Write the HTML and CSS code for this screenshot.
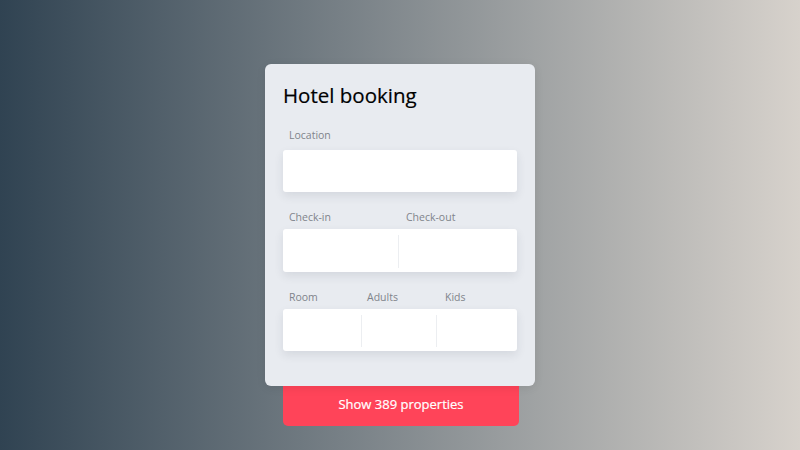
FILE: index.html
```html
<!DOCTYPE html>
<html lang="en">
<head>
<meta charset="utf-8">
<link rel="stylesheet" href="styles.css">
</head>
<body>
<main class="wrap">
  <form class="card">
    <h1 class="title">Hotel booking</h1>
    <label class="label label-first">Location</label>
    <div class="box"><div class="cell"></div></div>

    <div class="labels cols-2">
      <span class="label">Check-in</span>
      <span class="label">Check-out</span>
    </div>
    <div class="box cols-2">
      <div class="cell"></div>
      <div class="cell"></div>
    </div>

    <div class="labels cols-3">
      <span class="label">Room</span>
      <span class="label">Adults</span>
      <span class="label">Kids</span>
    </div>
    <div class="box cols-3b">
      <div class="cell"></div>
      <div class="cell"></div>
      <div class="cell"></div>
    </div>
  </form>
  <button class="cta" type="button">Show 389 properties</button>
</main>
</body>
</html>
```
FILE: styles.css
```css
* { box-sizing: border-box; }
html, body { margin: 0; height: 100%; }
body {
  background: linear-gradient(to right, #304352, #d7d2cc);
  font-family: "Open Sans", "Noto Sans", sans-serif;
  overflow: hidden;
}
.wrap {
  display: flex;
  flex-direction: column;
  align-items: center;
  padding-top: 64px;
}
.card {
  position: relative;
  z-index: 1;
  width: 270px;
  height: 322px;
  background: #e8ebf0;
  border-radius: 6px;
  padding: 16px 18px 35px;
  display: flex;
  flex-direction: column;
  box-shadow: 0 2px 10px rgba(0, 0, 0, 0.08);
}
.title {
  margin: 0;
  font-size: 20.5px;
  font-weight: 400;
  line-height: 30px;
  color: #000;
  height: 30px;
  margin-bottom: 17px;
  -webkit-text-stroke: 0.2px #000;
}
.label {
  display: block;
  font-size: 10.5px;
  line-height: 16px;
  color: #80848b;
  padding-left: 6px;
}
.label-first { margin-bottom: 7px; }
.labels {
  display: grid;
  margin-top: 17px;
  margin-bottom: 4px;
}
.cols-2 { grid-template-columns: 1fr 1fr; }
.cols-3 { grid-template-columns: 1fr 1fr 1fr; }
.cols-3b { grid-template-columns: 78fr 74fr 81fr; }
.box {
  display: grid;
  height: 43px;
  background: #fff;
  border-radius: 3px;
  box-shadow: 0 4px 10px rgba(40, 50, 70, 0.1);
}
.box.cols-2 { grid-template-columns: 115fr 118fr; }
.box .cell { position: relative; }
.box .cell + .cell::before {
  content: "";
  position: absolute;
  left: 0;
  top: 6px;
  bottom: 4px;
  width: 1px;
  background: #eceef1;
}
.cta {
  width: 236px;
  height: 40px;
  margin-left: 2px;
  border: 0;
  border-radius: 0 0 5px 5px;
  background: #ff4459;
  color: #fff;
  font-family: "Open Sans", "Noto Sans", sans-serif;
  font-size: 13px;
  padding: 0 0 5px;
  -webkit-text-stroke: 0.2px #fff;
  cursor: pointer;
}
```
